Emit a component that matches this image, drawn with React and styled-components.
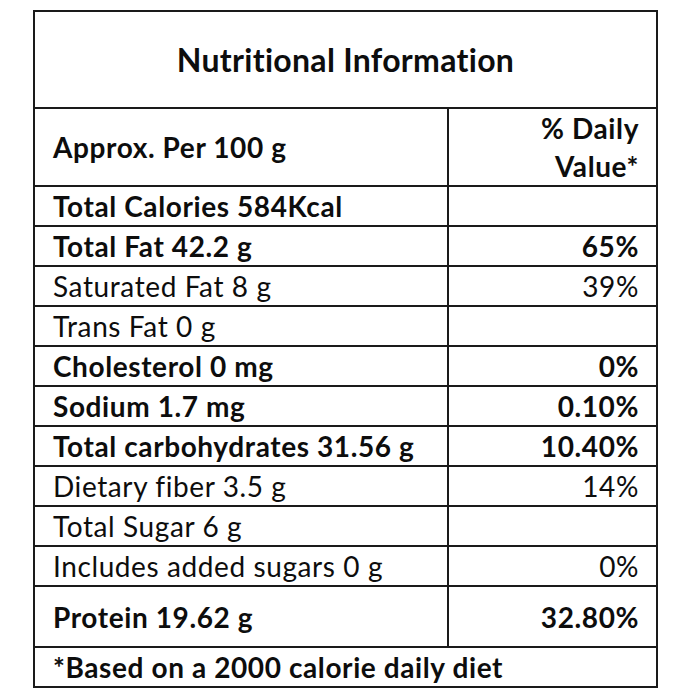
import React from "react";
import styled, { createGlobalStyle } from "styled-components";

const GlobalStyle = createGlobalStyle`
  body {
    margin: 0;
    background: #ffffff;
    font-family: Lato, "Open Sans", sans-serif;
    color: #0d0d0d;
  }
`;

const Page = styled.div`
  padding: 10px 0 0 33px;
`;

const Table = styled.table`
  width: 623px;
  table-layout: fixed;
  border-collapse: collapse;
  border: 2px solid #1a1a1a;
  font-size: 28px;
  letter-spacing: 0.6px;
`;

const Cell = styled.td`
  border: 2px solid #1a1a1a;
  height: ${(p) => p.$h || 36}px;
  padding: 0 17px 0 18px;
  font-weight: ${(p) => (p.$bold ? 700 : 400)};
  text-align: ${(p) => p.$align || "left"};
  white-space: nowrap;
  line-height: 38px;
  vertical-align: middle;
`;

const Title = styled.th`
  border: 2px solid #1a1a1a;
  height: 93px;
  font-size: 32px;
  font-weight: 700;
  letter-spacing: 0.3px;
  text-align: center;
`;

const rows = [
  { name: "Total Calories 584Kcal", dv: "", bold: true },
  { name: "Total Fat 42.2 g", dv: "65%", bold: true },
  { name: "Saturated Fat 8 g", dv: "39%" },
  { name: "Trans Fat 0 g", dv: "" },
  { name: "Cholesterol 0 mg", dv: "0%", bold: true },
  { name: "Sodium 1.7 mg", dv: "0.10%", bold: true },
  { name: "Total carbohydrates 31.56 g", dv: "10.40%", bold: true },
  { name: "Dietary fiber 3.5 g", dv: "14%" },
  { name: "Total Sugar 6 g", dv: "" },
  { name: "Includes added sugars 0 g", dv: "0%" },
  { name: "Protein 19.62 g", dv: "32.80%", bold: true, h: 59 },
];

export default function App() {
  return (
    <Page>
      <GlobalStyle />
      <Table>
        <colgroup>
          <col style={{ width: 414 }} />
          <col style={{ width: 209 }} />
        </colgroup>
        <thead>
          <tr>
            <Title colSpan={2}>Nutritional Information</Title>
          </tr>
        </thead>
        <tbody>
          <tr>
            <Cell $bold $h={75}>Approx. Per 100 g</Cell>
            <Cell $bold $align="right" $h={75}>
              % Daily
              <br />
              Value*
            </Cell>
          </tr>
          {rows.map((r, i) => (
            <tr key={i}>
              <Cell $bold={r.bold} $h={r.h}>{r.name}</Cell>
              <Cell $bold={r.bold} $align="right" $h={r.h}>{r.dv}</Cell>
            </tr>
          ))}
          <tr>
            <Cell colSpan={2} $bold $h={38}>*Based on a 2000 calorie daily diet</Cell>
          </tr>
        </tbody>
      </Table>
    </Page>
  );
}
